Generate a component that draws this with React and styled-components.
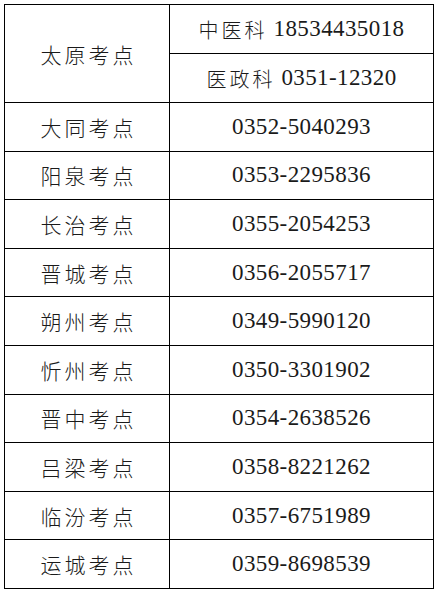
import React from "react";
import styled, { createGlobalStyle } from "styled-components";

const GlobalStyle = createGlobalStyle`
  html, body {
    margin: 0;
    padding: 0;
    background: #fff;
  }
  body {
    padding: 4px;
  }
`;

const Table = styled.div`
  width: 430px;
  box-sizing: border-box;
  display: grid;
  grid-template-columns: 165px 1fr;
  grid-template-rows: 49px 49px;
  grid-auto-rows: 48.6px;
  border-top: 1px solid #000;
  border-left: 1px solid #000;
  color: #1a1a1a;
`;

const Cell = styled.div`
  box-sizing: border-box;
  display: flex;
  align-items: center;
  justify-content: center;
  border-right: 1px solid #000;
  border-bottom: 1px solid #000;
  grid-row: ${(p) => (p.$span ? `span ${p.$span}` : "auto")};
  white-space: nowrap;
`;

const Place = styled.span`
  font-family: "Noto Sans CJK SC", sans-serif;
  font-weight: 300;
  font-size: 21px;
  letter-spacing: 3px;
  margin-right: -3px;
`;

const Phone = styled.span`
  font-family: "Liberation Serif", "Noto Sans CJK SC", serif;
  font-size: 23px;
  letter-spacing: 0.4px;
  display: flex;
  align-items: center;
  gap: 6px;
`;

const Dept = styled.span`
  font-family: "Noto Sans CJK SC", sans-serif;
  font-weight: 300;
  font-size: 20px;
  letter-spacing: 3px;
`;

const rows = [
  ["大同考点", "0352-5040293"],
  ["阳泉考点", "0353-2295836"],
  ["长治考点", "0355-2054253"],
  ["晋城考点", "0356-2055717"],
  ["朔州考点", "0349-5990120"],
  ["忻州考点", "0350-3301902"],
  ["晋中考点", "0354-2638526"],
  ["吕梁考点", "0358-8221262"],
  ["临汾考点", "0357-6751989"],
  ["运城考点", "0359-8698539"],
];

export default function App() {
  return (
    <>
      <GlobalStyle />
      <Table>
        <Cell $span={2}>
          <Place>太原考点</Place>
        </Cell>
        <Cell>
          <Phone>
            <Dept>中医科</Dept>18534435018
          </Phone>
        </Cell>
        <Cell>
          <Phone>
            <Dept>医政科</Dept>0351-12320
          </Phone>
        </Cell>
        {rows.map(([place, phone]) => (
          <React.Fragment key={place}>
            <Cell>
              <Place>{place}</Place>
            </Cell>
            <Cell>
              <Phone>{phone}</Phone>
            </Cell>
          </React.Fragment>
        ))}
      </Table>
    </>
  );
}
